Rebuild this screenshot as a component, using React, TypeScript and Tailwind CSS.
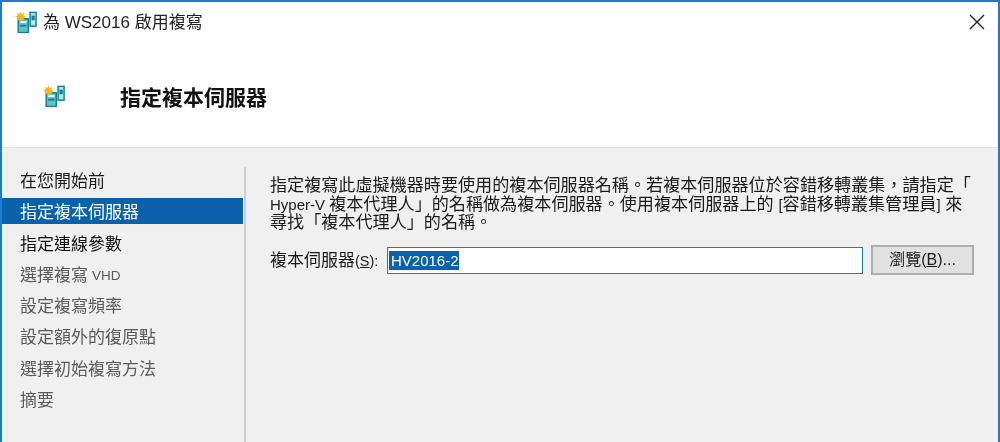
const font = { fontFamily: '"Liberation Sans", "Noto Sans CJK TC", sans-serif' };

function ServerIcon({ className }: { className: string }) {
  return (
    <svg viewBox="0 0 24 24" className={className}>
      <rect x="3.5" y="8.5" width="11" height="15" fill="#5cc4c8" stroke="#14808a" strokeWidth="1.6" />
      <rect x="5.5" y="11" width="7" height="2" fill="#e8fafa" />
      <rect x="5.5" y="15" width="7" height="2" fill="#14808a" />
      <rect x="16.5" y="1.5" width="6.5" height="15" fill="#b5e6e8" stroke="#14808a" strokeWidth="1.6" />
      <rect x="18" y="5" width="3.5" height="5" fill="#14808a" />
      <path d="M6 0.5l1.3 2.7 2.8-1-.9 2.9 2.8 1.3-2.8 1.3.9 2.9-2.8-1L6 12.2l-1.3-2.6-2.8 1 .9-2.9L0 6.4l2.8-1.3-.9-2.9 2.8 1z" fill="#f5b52a" />
    </svg>
  );
}

const steps = [
  { label: "在您開始前", tone: "text-[#1a1a1a]" },
  { label: "指定複本伺服器", tone: "bg-[#0a62ad] text-white" },
  { label: "指定連線參數", tone: "text-[#111111]" },
  { label: "選擇複寫", small: "VHD", tone: "text-[#5a5a5a]" },
  { label: "設定複寫頻率", tone: "text-[#5a5a5a]" },
  { label: "設定額外的復原點", tone: "text-[#5a5a5a]" },
  { label: "選擇初始複寫方法", tone: "text-[#5a5a5a]" },
  { label: "摘要", tone: "text-[#5a5a5a]" },
];

export default function App() {
  return (
    <div style={font} className="w-[1000px] h-[442px] overflow-hidden flex flex-col bg-white border-t-2 border-x-2 border-[#1c7cd0] text-[#1a1a1a] blur-[0.4px]">
      <header className="flex items-center h-[40px] shrink-0 bg-white pl-[13px] pr-[13px]">
        <ServerIcon className="w-[22px] h-[22px] mr-[6px]" />
        <span className="text-[17px] leading-none text-[#222222]">為 WS2016 啟用複寫</span>
        <svg viewBox="0 0 16 16" className="w-[16px] h-[16px] ml-auto" fill="none" stroke="#222222" strokeWidth="1.4">
          <path d="M1 1l14 14M15 1L1 15" />
        </svg>
      </header>
      <div className="flex items-center h-[106px] shrink-0 bg-white border-b border-[#e4e4e4] pt-[3px]">
        <ServerIcon className="w-[22px] h-[22px] ml-[41px]" />
        <h1 className="ml-[55px] mt-[3px] text-[21px] leading-none font-bold text-[#111111]">指定複本伺服器</h1>
      </div>
      <main className="flex flex-1 min-h-0 bg-[#f0f0f0] pt-[19px]">
        <nav className="w-[241px] shrink-0 flex flex-col">
          {steps.map((s) => (
            <div key={s.label} className={`h-[26px] mb-[5.3px] pl-[18px] pt-[3px] flex items-center gap-[4px] text-[17px] leading-none whitespace-nowrap ${s.tone}`}>
              {s.label}
              {s.small && <span className="text-[13.5px]">{s.small}</span>}
            </div>
          ))}
        </nav>
        <div className="w-[2px] shrink-0 bg-[#cfcfcf] ml-[1px]" />
        <section className="flex-1 min-w-0 pl-[24px] pr-[24px] pt-[10px]">
          <p className="whitespace-nowrap text-[17.1px] leading-[18.5px] text-[#1a1a1a]">
            指定複寫此虛擬機器時要使用的複本伺服器名稱。若複本伺服器位於容錯移轉叢集{"\uFF0C"}請指定「
            <br />
            <span className="text-[15px]">Hyper-V </span>複本代理人」的名稱做為複本伺服器。使用複本伺服器上的 <span className="text-[15px]">[</span>容錯移轉叢集管理員<span className="text-[15px]">]</span> 來
            <br />
            尋找「複本代理人」的名稱。
          </p>
          <div className="flex items-center mt-[12px]">
            <label className="w-[117px] shrink-0 text-[17px] leading-none whitespace-nowrap">
              複本伺服器<span className="text-[14.5px]">(<span className="underline">S</span>):</span>
            </label>
            <div className="w-[476px] h-[27px] shrink-0 bg-white border border-[#1a78c8] flex items-center pl-[1px]">
              <span className="bg-[#0a62ad] text-white text-[15px] leading-[19px] pl-[2px]">HV2016-2</span>
            </div>
            <button className="w-[103px] h-[30px] ml-[8px] mb-[2px] shrink-0 bg-[#e1e1e1] border-2 border-[#adadad] text-[16px] leading-none text-[#1a1a1a]">
              瀏覽(<span className="underline">B</span>)...
            </button>
          </div>
        </section>
      </main>
    </div>
  );
}
